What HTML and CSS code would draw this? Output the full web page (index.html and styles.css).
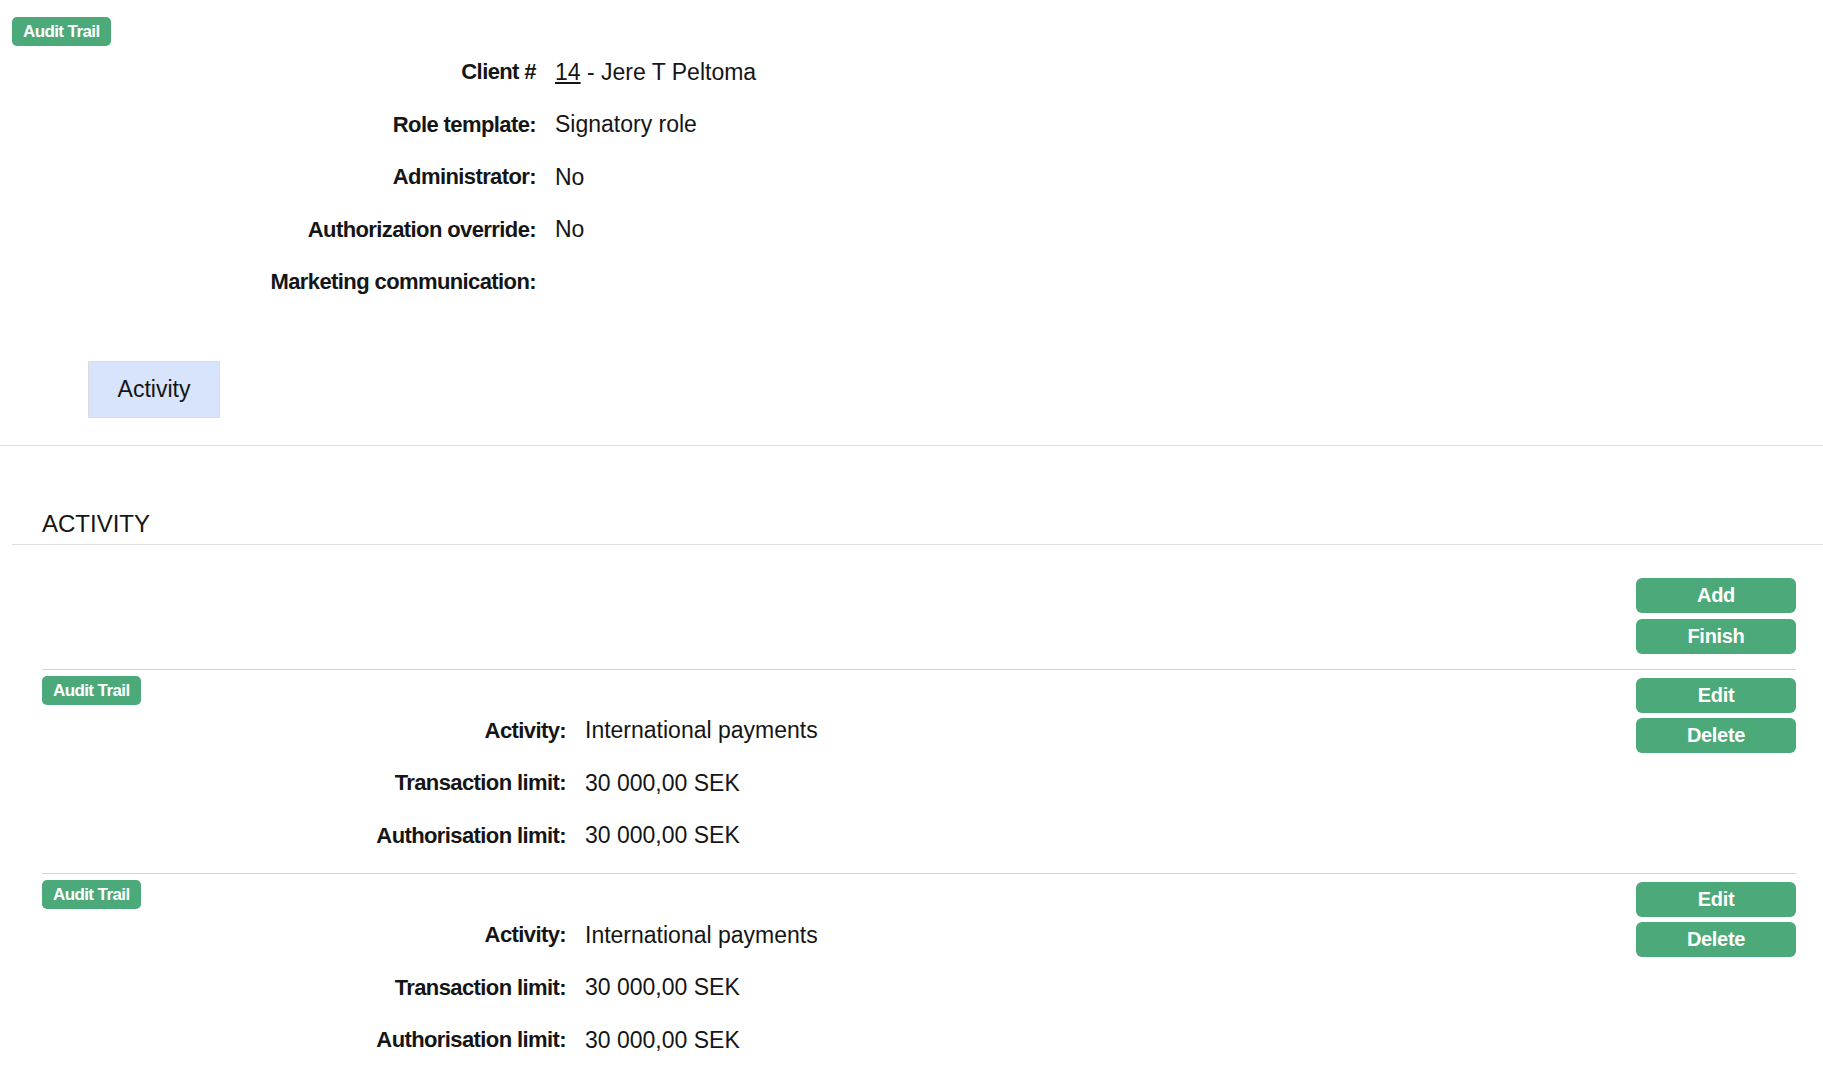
FILE: index.html
```html
<!DOCTYPE html>
<html>
<head>
    <title>Signatory role</title>
    <meta name="viewport" content="width=device-width, initial-scale=1.0">
    <link rel="stylesheet" href="styles.css">
</head>
<body>
    <div class="header">
        <span class="badge">Audit Trail</span>

        <div class="details">
            <div class="label">Client #</div>
            <div class="value"><a href="#">14</a> - Jere T Peltoma</div>

            <div class="label">Role template:</div>
            <div class="value">Signatory role</div>

            <div class="label">Administrator:</div>
            <div class="value">No</div>

            <div class="label">Authorization override:</div>
            <div class="value">No</div>

            <div class="label">Marketing communication:</div>
            <div class="value"></div>
        </div>
    </div>

    <div class="tabs">
        <div class="tab active">Activity</div>
    </div>

    <div class="section">
        <h2 class="section-title">ACTIVITY</h2>

        <div class="section-body">
            <div class="toolbar">
                <button class="btn">Add</button>
                <button class="btn">Finish</button>
            </div>

            <div class="item">
                <div class="item-main">
                    <span class="badge">Audit Trail</span>
                    <div class="details">
                        <div class="label">Activity:</div>
                        <div class="value">International payments</div>
                        <div class="label">Transaction limit:</div>
                        <div class="value">30 000,00 SEK</div>
                        <div class="label">Authorisation limit:</div>
                        <div class="value">30 000,00 SEK</div>
                    </div>
                </div>
                <div class="item-actions">
                    <button class="btn">Edit</button>
                    <button class="btn">Delete</button>
                </div>
            </div>

            <div class="item">
                <div class="item-main">
                    <span class="badge">Audit Trail</span>
                    <div class="details">
                        <div class="label">Activity:</div>
                        <div class="value">International payments</div>
                        <div class="label">Transaction limit:</div>
                        <div class="value">30 000,00 SEK</div>
                        <div class="label">Authorisation limit:</div>
                        <div class="value">30 000,00 SEK</div>
                    </div>
                </div>
                <div class="item-actions">
                    <button class="btn">Edit</button>
                    <button class="btn">Delete</button>
                </div>
            </div>
        </div>
    </div>
</body>
</html>
```

FILE: styles.css
```css
body {
    font-family: "Liberation Sans", Arial, sans-serif;
    color: #151515;
    background: #fff;
    margin: 0;
    font-size: 23px;
}
.header {
    padding: 16px 12px 0 12px;
}
.badge {
    display: inline-block;
    background-color: #4ca97a;
    color: #fff;
    font-weight: bold;
    font-size: 17px;
    letter-spacing: -0.6px;
    line-height: 29px;
    height: 29px;
    padding: 0 11px;
    border-radius: 5px;
}
.details {
    display: grid;
    grid-template-columns: 524px 1fr;
    column-gap: 19px;
    grid-auto-rows: 52.5px;
    align-items: center;
}
.label {
    text-align: right;
    font-weight: bold;
    font-size: 22px;
    letter-spacing: -0.6px;
}
.value a {
    color: #151515;
}
.tabs {
    margin-top: 52px;
    padding: 0 0 27px 88px;
    border-bottom: 1px solid #dedede;
}
.tab {
    display: inline-block;
    box-sizing: border-box;
    width: 132px;
    height: 57px;
    line-height: 55px;
    text-align: center;
    background-color: #d7e4fb;
    border: 1px solid #dcdcdc;
}
.section {
    margin: 63px 0 0 12px;
}
.section-title {
    font-weight: normal;
    font-size: 24px;
    line-height: 30px;
    margin: 0;
    padding: 0 0 5px 30px;
    border-bottom: 1px solid #dedede;
}
.section-body {
    padding: 0 27px 0 30px;
}
.toolbar {
    display: flex;
    flex-direction: column;
    align-items: flex-end;
    gap: 6px;
    padding: 33px 0 15px 0;
    border-bottom: 1px solid #d4d4d4;
}
.btn {
    width: 160px;
    height: 35px;
    border: none;
    border-radius: 6px;
    background-color: #4ca97a;
    color: #fff;
    font-family: inherit;
    font-weight: bold;
    font-size: 20px;
    letter-spacing: -0.3px;
    cursor: pointer;
}
.item {
    display: flex;
    padding: 5px 0 11px 0;
    border-bottom: 1px solid #d4d4d4;
}
.item:last-child {
    border-bottom: none;
}
.item-main {
    flex: 1;
}
.item-actions {
    display: flex;
    flex-direction: column;
    gap: 5px;
    padding-top: 3px;
}
```
